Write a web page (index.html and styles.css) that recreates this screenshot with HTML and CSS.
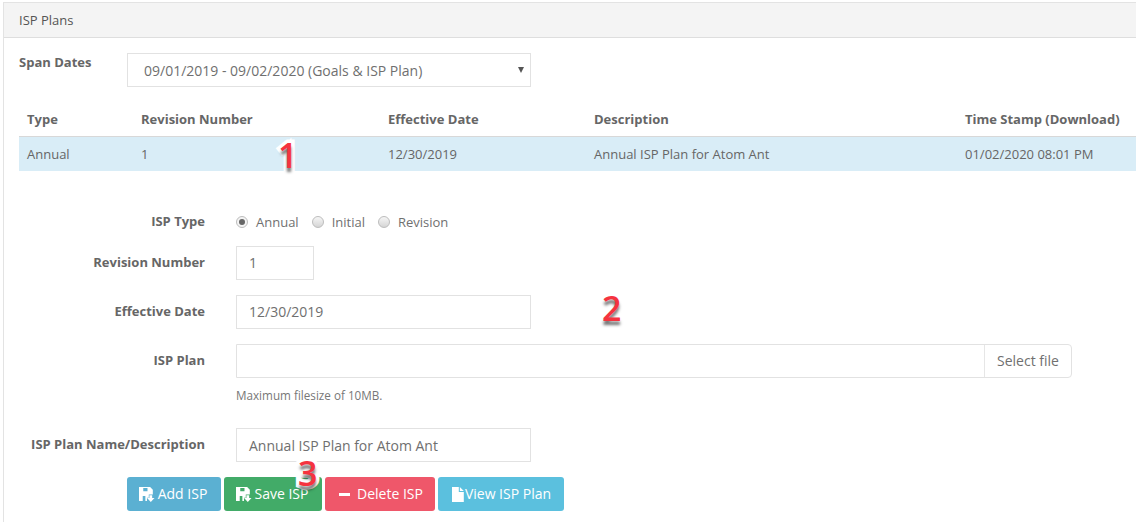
FILE: index.html
```html
<!DOCTYPE html>
<html lang="en">
<head>
<meta charset="utf-8">
<title>ISP Plans</title>
<link rel="stylesheet" href="styles.css">
</head>
<body>
<section class="panel">
  <header class="panel-head">ISP Plans</header>
  <div class="panel-body">
    <div class="span-row">
      <div class="span-label">Span Dates</div>
      <div class="select">09/01/2019 - 09/02/2020 (Goals &amp; ISP Plan)<span class="caret"></span></div>
    </div>
    <div class="table">
      <div class="tr th"><div>Type</div><div>Revision Number</div><div>Effective Date</div><div>Description</div><div>Time Stamp (Download)</div></div>
      <div class="tr td"><div>Annual</div><div>1</div><div>12/30/2019</div><div>Annual ISP Plan for Atom Ant</div><div>01/02/2020 08:01 PM</div></div>
    </div>
    <div class="form">
      <div class="row row-radio">
        <div class="label">ISP Type</div>
        <div class="radios">
          <span class="radio on"></span><span class="radio-text">Annual</span>
          <span class="radio"></span><span class="radio-text">Initial</span>
          <span class="radio"></span><span class="radio-text">Revision</span>
        </div>
      </div>
      <div class="row">
        <div class="label">Revision Number</div>
        <div class="input short">1</div>
      </div>
      <div class="row">
        <div class="label">Effective Date</div>
        <div class="input mid">12/30/2019</div>
      </div>
      <div class="row row-file">
        <div class="label">ISP Plan</div>
        <div class="file-col">
          <div class="file"><div class="file-field"></div><div class="file-btn">Select file</div></div>
          <div class="help">Maximum filesize of 10MB.</div>
        </div>
      </div>
      <div class="row">
        <div class="label">ISP Plan Name/Description</div>
        <div class="input mid name-input">Annual ISP Plan for Atom Ant</div>
      </div>
      <div class="buttons">
        <div class="btn b-add"><svg class="ico" viewBox="0 0 16 14"><path fill-rule="evenodd" d="M0 0h10.5L13 2.5V7H9.2v3H7.5v3H0zM4 0.8V4h4V.8zM3.5 8.5V13h2.5V8.5z"/><path d="M9.8 7.8h2.6v2.6h2.2L11.1 14 7.6 10.4h2.2z"/></svg>Add ISP</div>
        <div class="btn b-save"><svg class="ico" viewBox="0 0 16 14"><path fill-rule="evenodd" d="M0 0h10.5L13 2.5V7H9.2v3H7.5v3H0zM4 0.8V4h4V.8zM3.5 8.5V13h2.5V8.5z"/><path d="M9.8 7.8h2.6v2.6h2.2L11.1 14 7.6 10.4h2.2z"/></svg>Save ISP</div>
        <div class="btn b-del"><span class="minus"></span>Delete ISP</div>
        <div class="btn b-view"><svg class="ico-doc" viewBox="0 0 12 15"><path d="M0 0h6.8v5h5v10H0z"/><path d="M7.8 0l4 4h-4z"/></svg>View ISP Plan</div>
      </div>
    </div>
  </div>
</section>
<span class="mark m1">1</span>
<span class="mark m2">2</span>
<span class="mark m3">3</span>
</body>
</html>
```
FILE: styles.css
```css
* { box-sizing: border-box; }
html, body { margin: 0; height: 522px; overflow: hidden; background: #fff; }
body { padding: 2px 0 0 3px; font: 13px/18px "Open Sans", sans-serif; color: #6a6a6a; width: 1136px; position: relative; }

.panel { width: 1160px; height: 530px; border: 1px solid #e3e3e3; border-right: 0; border-bottom: 0; }
.panel-head { height: 35px; background: #f4f4f4; border-bottom: 1px solid #dedede; padding: 8px 15px; font-size: 13px; color: #555; }
.panel-body { padding: 15px 0 0 15px; }

.span-row { display: flex; align-items: flex-start; height: 34px; }
.span-label { width: 108px; font-weight: 700; font-size: 13px; color: #666; line-height: 18px; }
.select { position: relative; width: 404px; height: 34px; border: 1px solid #e2e2e2; padding: 8px 16px; font-size: 14px; color: #6f6f6f; }
.caret { position: absolute; right: 6px; top: 13px; border-left: 3px solid transparent; border-right: 3px solid transparent; border-top: 6px solid #555; }

.table { margin-top: 15px; width: 1145px; font-size: 13px; }
.tr { display: grid; grid-template-columns: 114px 247px 206px 371px 1fr; padding-left: 8px; }
.th { height: 35px; border-bottom: 1px solid #d8d8d8; padding-top: 8px; font-weight: 700; color: #666; }
.td { height: 34px; background: #d9edf7; padding-top: 8px; color: #666; }

.form { margin-top: 34px; }
.row { display: flex; align-items: flex-start; margin-bottom: 15px; }
.label { width: 186px; margin-right: 31px; text-align: right; font-weight: 700; font-size: 13px; color: #666; padding-top: 7px; }
.row-radio { height: 26px; margin-bottom: 15px; }
.row-radio .label { padding-top: 7px; }
.radios { display: flex; align-items: center; height: 34px; font-size: 13px; padding-bottom: 1px; }
.radio { width: 12px; height: 12px; border-radius: 50%; border: 1px solid #bdbdbd; background: linear-gradient(#f6f6f6, #d5d5d5); margin-right: 8px; position: relative; }
.radio.on { background: #f4f4f4; }
.radio.on::after { content: ""; position: absolute; left: 2px; top: 2px; width: 6px; height: 6px; border-radius: 50%; background: #666; }
.radio-text { margin-right: 13px; color: #707070; }

.input { height: 34px; border: 1px solid #e2e2e2; padding: 7px 12px; font-size: 14px; color: #6f6f6f; }
.short { width: 78px; }
.mid { width: 295px; }
.name-input { padding-top: 8px; }

.file-col { width: 836px; }
.file { display: flex; height: 34px; border: 1px solid #e2e2e2; border-radius: 0 4px 4px 0; }
.file-field { flex: 1; }
.file-btn { width: 87px; border-left: 1px solid #e6e6e6; padding: 7px 0 0 12px; font-size: 14px; color: #707070; white-space: nowrap; }
.help { font-size: 11.7px; line-height: 16px; margin-top: 9px; color: #777; }
.row-file { margin-bottom: 25px; }

.buttons { display: flex; gap: 3px; margin: 0 0 0 108px; }
.btn { display: flex; align-items: center; justify-content: center; height: 34px; border-radius: 3px; color: #fff; font-size: 14px; white-space: nowrap; }
.b-add { width: 94px; padding-right: 2px; background: #5bb0d2; }
.b-save { width: 98px; padding-right: 2px; background: #42ab68; }
.b-del { width: 110px; padding-left: 2px; background: #ef576a; }
.b-view { width: 126px; padding-left: 1px; background: #5bc0de; }
.ico { width: 17px; height: 15px; fill: #fff; margin-right: 2px; }
.ico-doc { width: 12px; height: 15px; fill: #fff; margin-right: 1px; }
.minus { width: 11px; height: 3px; background: #fff; margin-right: 7px; }

.mark { position: absolute; font: 600 34px/34px "Open Sans", sans-serif; color: #f5333f; -webkit-text-stroke: 7px #fff; paint-order: stroke fill; text-shadow: 0 4px 3px rgba(0,0,0,.55); }
.m1 { left: 278px; top: 138px; }
.m2 { left: 602px; top: 291px; }
.m3 { left: 298px; top: 456px; }
```
